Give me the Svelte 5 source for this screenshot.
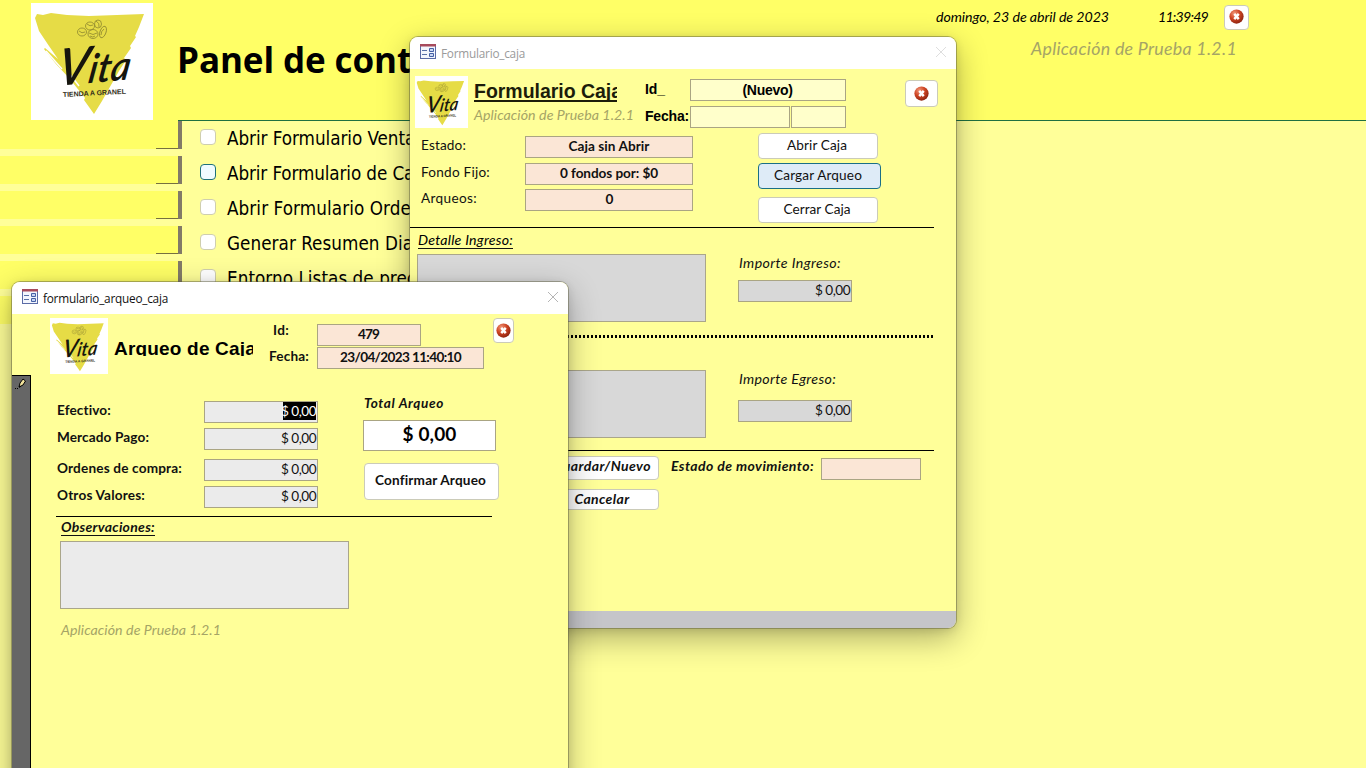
<script>
  const menu = [
    { label: 'Abrir Formulario Ventas', width: 197 },
    { label: 'Abrir Formulario de Caja', width: 202, active: true },
    { label: 'Abrir Formulario Ordenes', width: 214 },
    { label: 'Generar Resumen Diario', width: 208 },
    { label: 'Entorno Listas de precios', width: 213 },
    { label: '', width: 0 }
  ];
  const status = [
    { label: 'Estado:', width: 45, value: 'Caja sin Abrir', vw: 81 },
    { label: 'Fondo Fijo:', width: 69, value: '0 fondos por: $0', vw: 98 },
    { label: 'Arqueos:', width: 56, value: '0', vw: 7 }
  ];
  const amounts = [
    { label: 'Efectivo:', width: 54, selected: true },
    { label: 'Mercado Pago:', width: 92 },
    { label: 'Ordenes de compra:', width: 125 },
    { label: 'Otros Valores:', width: 88 }
  ];

  // Spreads the letters of a caption so that it fills its control's text width.
  function fit(node, width) {
    const natural = node.getBoundingClientRect().width;
    const count = node.textContent.length;
    if (count && width) node.style.letterSpacing = `${(width - natural) / count}px`;
  }
</script>

{#snippet cap(text, width, cls)}<span class="cap {cls ?? ''}" use:fit={width}>{text}</span>{/snippet}

{#snippet logo()}
  <svg class="logo" viewBox="0 0 122 117" preserveAspectRatio="none">
    <rect width="122" height="117" fill="#fff" />
    <path fill="#e6dc46" d="M4 15 L6 11 L12 12 L20 10 L36 12 L58 13 L86 12 L113 11 L108 24 L104 33 L105 34 L99 43 L100 45 L93 55 L95 57 L88 68 L80 82 L71 98 L63 111 L58 104 L53 97 L54 95 L38 75 L25 61 L13 46 L14 45 L27 56 L18 43 L8 28Z" />
    <path fill="none" stroke="#fff" stroke-width="1.5" d="M15 48 L31 66 M33 73 L50 91 M38 70 L48 83" />
    <g fill="none" stroke="#8d862f" stroke-width=".8">
      <ellipse cx="59" cy="23" rx="4.5" ry="4" /><ellipse cx="67" cy="21" rx="3.5" ry="4" />
      <ellipse cx="51" cy="29" rx="4.5" ry="4" /><ellipse cx="62" cy="31" rx="5" ry="4.5" />
      <ellipse cx="72" cy="29" rx="3" ry="6" transform="rotate(20 72 29)" />
      <path d="M56 21q3 3 6 1M65 18q4 2 3 6M48 28q3 3 6 1M58 30q4 3 8 0M70 32q0-4 3-6M59 33q3 2 5 0" />
    </g>
    <g transform="translate(25 83) rotate(-5) skewX(-14)">
      <text class="vita" textLength="73" lengthAdjust="spacingAndGlyphs"><tspan font-size="51">V</tspan><tspan font-size="40">ita</tspan></text>
    </g>
    <text class="tag" x="32" y="94" transform="rotate(-3 32 94)" font-size="7" textLength="63" lengthAdjust="spacing">TIENDA A GRANEL</text>
  </svg>
{/snippet}

{#snippet stop()}
  <svg class="stop" viewBox="0 0 16 16">
    <defs>
      <radialGradient id="ball" cx=".35" cy=".28" r=".75">
        <stop offset="0" stop-color="#f0967a" /><stop offset=".5" stop-color="#cf4524" /><stop offset="1" stop-color="#8e2410" />
      </radialGradient>
    </defs>
    <circle cx="8" cy="8" r="7.6" fill="url(#ball)" />
    <path d="M5.6 5.2 10.4 10.8M10.4 5.2 5.6 10.8" stroke="#fff" stroke-width="2.6" />
  </svg>
{/snippet}

{#snippet formIcon()}
  <svg class="formicon" viewBox="0 0 16 15">
    <rect x=".5" y=".5" width="15" height="14" fill="#f3f6fd" stroke="#5a6ba6" />
    <rect width="16" height="2.5" fill="#a74a5c" />
    <path d="M2 6.5h5M2 10.5h5" stroke="#5870a6" />
    <path d="M9.5 4.5h4v3h-4zM9.5 9.5h4v3h-4z" fill="#c9d6f2" stroke="#4560a5" />
  </svg>
{/snippet}

{#snippet cross()}
  <svg class="cross" viewBox="0 0 10 10"><path d="M0 0 10 10M10 0 0 10" fill="none" stroke="currentColor" /></svg>
{/snippet}

<main class="desk">
  <header class="top">
    <div class="biglogo">{@render logo()}</div>
    <h1>{@render cap('Panel de control', 283)}</h1>
    <div class="info">
      <div class="clock">
        {@render cap('domingo, 23 de abril de 2023', 173)}
        <span class="time">{@render cap('11:39:49', 50)}</span>
        <button class="exit">{@render stop()}</button>
      </div>
      <div class="version">{@render cap('Aplicación de Prueba 1.2.1', 206)}</div>
    </div>
  </header>
  <nav>
    {#each menu as item}
      <div class="item">
        <div class="tab"><i></i></div>
        <span class="check" class:active={item.active}></span>
        {@render cap(item.label, item.width)}
      </div>
    {/each}
  </nav>

  <section class="window caja">
    <div class="bar">{@render formIcon()}{@render cap('Formulario_caja', 84)}{@render cross()}</div>
    <div class="chead">
      <div class="slogo">{@render logo()}</div>
      <div class="ctitle">
        <h2>{@render cap('Formulario Caja', 148)}</h2>
        <div class="ver">{@render cap('Aplicación de Prueba 1.2.1', 160)}</div>
      </div>
      <div class="keys"><div>{@render cap('Id_', 20)}</div><div>{@render cap('Fecha:', 44)}</div></div>
      <div class="keyfields">
        <div class="field">{@render cap('(Nuevo)', 50)}</div>
        <div class="pair"><div class="field"></div><div class="field"></div></div>
      </div>
      <button class="exit wide">{@render stop()}</button>
    </div>
    <div class="cstatus">
      <div class="rows">
        {#each status as row}
          <div class="row"><label>{@render cap(row.label, row.width)}</label><div class="field pink">{@render cap(row.value, row.vw)}</div></div>
        {/each}
      </div>
      <div class="actions">
        <button>{@render cap('Abrir Caja', 60)}</button>
        <button class="hot">{@render cap('Cargar Arqueo', 88)}</button>
        <button>{@render cap('Cerrar Caja', 67)}</button>
      </div>
    </div>
    <div class="block ingreso">
      <div>
        <div class="heading">{@render cap('Detalle Ingreso:', 95, 'under')}</div>
        <div class="area"></div>
      </div>
      <div class="amount"><em>{@render cap('Importe Ingreso:', 102)}</em><div class="field">{@render cap('$ 0,00', 35)}</div></div>
    </div>
    <div class="block egreso">
      <div>
        <div class="heading"></div>
        <div class="area"></div>
      </div>
      <div class="amount"><em>{@render cap('Importe Egreso:', 97)}</em><div class="field">{@render cap('$ 0,00', 35)}</div></div>
    </div>
    <div class="cfoot">
      <div class="saves">
        <button>{@render cap('Guardar/Nuevo', 98)}</button>
        <button>{@render cap('Cancelar', 55)}</button>
      </div>
      <div class="move">{@render cap('Estado de movimiento:', 143)}</div>
      <div class="field pink state"></div>
    </div>
    <div class="strip"></div>
  </section>

  <section class="window arqueo">
    <div class="bar">{@render formIcon()}{@render cap('formulario_arqueo_caja', 125)}{@render cross()}</div>
    <div class="ahead">
      <div class="alogo">{@render logo()}</div>
      <h2>{@render cap('Arqueo de Caja', 142)}</h2>
      <div class="akeys"><div class="id">{@render cap('Id:', 16)}</div><div>{@render cap('Fecha:', 40)}</div></div>
      <div class="afields">
        <div class="field pink short">{@render cap('479', 21)}</div>
        <div class="field pink">{@render cap('23/04/2023 11:40:10', 121)}</div>
      </div>
      <button class="exit slim">{@render stop()}</button>
    </div>
    <div class="abody">
      <aside>
        <svg viewBox="0 0 12 12"><path d="M4 9 5 5 8 1 10.5 3 8 7Z" fill="#f3e39c" stroke="#000" /><path d="M4 10 4.5 7.5 6 8.5Z" /><path d="M0 10.5h4" stroke="#000" stroke-dasharray="1 1" /></svg>
      </aside>
      <div class="record">
        <div class="sums">
          <div class="values">
            {#each amounts as row}
              <div class="row"><label>{@render cap(row.label, row.width)}</label>
                <div class="field"><span class:sel={row.selected}>{@render cap('$ 0,00', 35)}</span></div></div>
            {/each}
          </div>
          <div class="total">
            <em>{@render cap('Total Arqueo', 80)}</em>
            <div class="field sum">{@render cap('$ 0,00', 54)}</div>
            <button>{@render cap('Confirmar Arqueo', 111)}</button>
          </div>
        </div>
        <div class="obs">{@render cap('Observaciones:', 94, 'under')}</div>
        <div class="area notes"></div>
        <div class="ver">{@render cap('Aplicación de Prueba 1.2.1', 160)}</div>
      </div>
    </div>
  </section>
</main>

<style>
  :global(body) { margin: 0; overflow: hidden; }
  .desk, .desk * { box-sizing: border-box; }
  .desk { position: relative; width: 1366px; height: 768px; overflow: hidden; background: #ffff99; font: 13.6px/18px Lato, sans-serif; color: #111; }
  .cap { display: inline-block; white-space: pre; }
  .under { border-bottom: 1px solid #111; line-height: 17px; }
  h1, h2 { margin: 0; }
  button { font: inherit; color: #111; padding: 0 2px 2px 0; background: #fff; border: 1px solid #cbcbb8; border-radius: 4px; display: flex; align-items: center; justify-content: center; }
  .logo, .stop, .formicon, .cross { display: block; flex: none; }
  .logo { width: 100%; height: 100%; }
  .vita { font-family: Lato, sans-serif; font-style: italic; font-weight: 600; fill: #16150d; }
  .tag { font-family: "Liberation Sans", sans-serif; font-weight: bold; fill: #33301a; }
  .stop { width: 15px; height: 15px; }
  .field { border: 1px solid #aaa583; height: 22px; display: flex; align-items: center; justify-content: center; padding: 0 0 2px 0; }
  .pink { background: #fbe6d6; font-weight: bold; }
  .area { width: 289px; height: 68px; background: #d8d8d8; border: 1px solid #aaa68a; }
  .ver, .version { color: #a5a466; font-style: italic; }
  .ver, .heading, .amount em, .clock { font-size: 14.2px; }

  .top { height: 121px; background: #ffff66; display: flex; }
  .biglogo { width: 122px; height: 117px; margin: 3px 0 0 31px; }
  h1 { font: bold 35px/48px "Open Sans", sans-serif; color: #000; margin: 36px 0 0 24px; width: 301px; }
  .info { width: 340px; margin: 3px 0 0 458px; font-style: italic; color: #000; }
  .clock { display: flex; height: 28px; align-items: center; }
  .time { margin-left: 49px; }
  .exit { width: 25px; height: 25px; padding: 0 1px 1px 0; }
  .clock .exit { margin-left: 16px; }
  .version { font-size: 17.8px; line-height: 22px; margin: 6px 0 0 95px; }

  nav { position: relative; font: 18.7px/24px "DejaVu Sans Condensed", "DejaVu Sans", sans-serif; font-stretch: condensed; color: #000; background: linear-gradient(#1f7040, #1f7040) 178px 0 / 1188px 1px no-repeat; margin-top: -1px; padding-top: 1px; }
  .item { display: flex; height: 35px; align-items: flex-start; overflow: hidden; }
  .item > .cap { margin: 6px 0 0 11px; }
  .tab { width: 182px; height: 28px; background: #ffff66; border-right: 4px solid #827a68; display: flex; justify-content: flex-end; align-items: flex-end; flex: none; }
  .item:not(:first-child) .tab { height: 29px; margin-top: -1px; }
  .tab i { width: 22px; height: 1px; background: #76703f; }
  .check { flex: none; width: 16px; height: 16px; border: 1px solid #cfceae; border-radius: 4px; background: #fff; margin: 8px 0 0 18px; }
  .check.active { border-color: #1f7178; background: #f0fbff; }

  .window { position: absolute; background: #ffff99; border-radius: 8px; overflow: hidden; box-shadow: 0 0 0 1px rgba(90, 90, 60, .45), 0 10px 32px rgba(0, 0, 0, .32), 0 2px 10px rgba(0, 0, 0, .12); display: flex; flex-direction: column; }
  .bar { height: 32px; flex: none; background: #fff; display: flex; align-items: center; padding: 0 10px; gap: 5px; font: 11.8px/16px "Open Sans", sans-serif; color: #111; }
  .formicon { width: 16px; height: 15px; margin-top: -3px; }
  .cross { width: 10px; height: 10px; margin: -2px 0 0 auto; color: #b5b5b5; }

  .caja { left: 410px; top: 37px; width: 546px; height: 591px; }
  .caja .bar { color: #9a9a9a; }
  .caja .cross { color: #dedede; }
  .chead { display: flex; height: 64px; padding-left: 5px; flex: none; }
  .slogo { width: 53px; height: 52px; margin-top: 7px; }
  .ctitle { width: 165px; margin-left: 6px; padding-top: 11px; }
  .ctitle h2 { width: 143px; height: 22px; overflow: hidden; font: bold 19.5px/22px "Liberation Sans", sans-serif; color: #1c1c0a; background: linear-gradient(#1c1c0a, #1c1c0a) 0 20px / 143px 2px no-repeat; }
  .ctitle .ver { margin-top: 4px; }
  .keys { width: 45px; padding-top: 10px; margin-left: 6px; font: bold 14px/20px "Liberation Sans", sans-serif; color: #000; }
  .keys div { height: 27px; }
  .keyfields { width: 156px; padding-top: 10px; font: bold 14px/18px "Liberation Sans", sans-serif; color: #000; }
  .keyfields .field { background: #ffffcb; padding: 0 1px 0 0; }
  .pair { display: grid; grid-template-columns: 100px 55px; gap: 1px; margin-top: 5px; }
  .wide { width: 33px; height: 27px; margin: 11px 0 0 59px; }
  .cstatus { display: flex; height: 95px; width: 524px; border-bottom: 1px solid #000; padding-left: 11px; flex: none; }
  .rows { display: flex; flex-direction: column; gap: 4.5px; padding-top: 3px; }
  .row { display: flex; }
  .rows label { width: 104px; }
  .rows .field { width: 168px; }
  .actions { margin-left: 65px; }
  .actions button { width: 120px; height: 26px; margin-bottom: 4px; }
  .actions .hot { width: 123px; margin-bottom: 8px; background: #deebf7; border-color: #1a6f86; padding-right: 3px; }
  .block { display: flex; flex: none; width: 524px; padding-left: 7px; }
  .ingreso { height: 110px; background: repeating-linear-gradient(90deg, transparent 0 1px, #000 1px 3px, transparent 3px 4px) 0 107px / 524px 3px no-repeat; }
  .egreso { height: 113px; border-bottom: 1px solid #000; }
  .heading { height: 26px; padding: 3px 0 0 1px; font-style: italic; color: #000; }
  .egreso .heading { height: 32px; padding-top: 12px; }
  .amount { margin: 26px 0 0 32px; }
  .egreso .amount { margin-top: 32px; }
  .amount em { display: block; height: 26px; padding-left: 1px; }
  .amount .field { width: 114px; background: #d8d8d8; justify-content: flex-end; padding-right: 1px; }
  .egreso .amount .field { margin-top: 4px; }
  .cfoot { display: flex; flex: 1; padding: 5px 0 0 135px; font: italic bold 14px/18px Lato, sans-serif; }
  .saves button { width: 114px; height: 24px; padding: 0 0 4px 0; }
  .saves button + button { height: 21px; margin-top: 9px; padding-bottom: 1px; }
  .move { margin: 1px 0 0 12px; width: 150px; }
  .state { width: 100px; margin-top: 2px; }
  .strip { height: 17px; background: #c5c5c9; flex: none; }

  .arqueo { left: 12px; top: 282px; width: 556px; height: 600px; font-weight: bold; }
  .ahead { display: flex; height: 61px; padding-left: 38px; flex: none; }
  .alogo { width: 58px; height: 56px; margin-top: 4px; }
  .ahead h2 { width: 139px; height: 18px; margin: 24px 0 0 6px; overflow: hidden; font: bold 19px/22px "Liberation Sans", sans-serif; color: #000; }
  .akeys { margin: 7px 0 0 16px; width: 48px; }
  .akeys .id { height: 26px; padding-left: 4px; }
  .afields { width: 167px; padding-top: 10px; }
  .afields .field { margin-bottom: 1px; }
  .afields .short { width: 104px; padding-right: 1px; }
  .slim { width: 21px; height: 25px; margin: 4px 0 0 9px; }
  .abody { display: flex; flex: 1; }
  aside { width: 19px; background: #666; border: solid #000; border-width: 1px 1px 0 0; padding: 2px 0 0 3px; }
  aside svg { display: block; width: 12px; height: 12px; }
  .record { padding-left: 26px; }
  .sums { display: flex; width: 436px; height: 142px; border-bottom: 1px solid #000; margin-left: -1px; padding-left: 1px; }
  .values { padding-top: 26px; }
  .values .row { height: 27px; }
  .values .row:nth-child(2) { height: 31px; }
  .values label { width: 147px; }
  .values .field { width: 114px; background: #ebebeb; justify-content: flex-end; padding-right: 1px; font-weight: normal; }
  .sel { background: linear-gradient(#000, #000) 2px 0 no-repeat; color: #fff; height: 18px; }
  .total { margin: 19px 0 0 45px; }
  .total em { display: block; height: 26px; padding-left: 1px; }
  .sum { width: 133px; height: 31px; background: #fff; font-size: 19px; color: #000; padding-bottom: 3px; }
  .total button { width: 135px; height: 37px; margin: 12px 0 0 1px; padding-bottom: 3px; font-weight: bold; }
  .obs { height: 24px; padding: 1px 0 0 4px; font-size: 14px; font-style: italic; }
  .notes { margin-left: 3px; background: #ebebeb; }
  .record .ver { margin: 12px 0 0 4px; font-weight: normal; }
</style>
